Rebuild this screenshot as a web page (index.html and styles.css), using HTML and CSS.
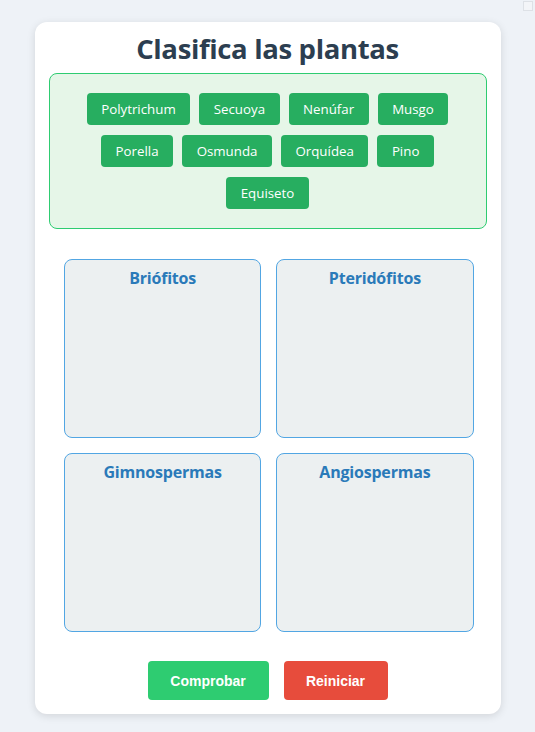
FILE: index.html
```html
<!DOCTYPE html>
<html>
<head>
    <meta charset="utf-8" />
    <title>Clasifica las plantas</title>
    <link rel="stylesheet" href="styles.css">
</head>
<body>
    <div class="corner-box"></div>

    <div class="card">
        <h1 class="title">Clasifica las plantas</h1>

        <div class="bank">
            <div class="chip">Polytrichum</div>
            <div class="chip">Secuoya</div>
            <div class="chip">Nenúfar</div>
            <div class="chip">Musgo</div>
            <div class="chip">Porella</div>
            <div class="chip">Osmunda</div>
            <div class="chip">Orquídea</div>
            <div class="chip">Pino</div>
            <div class="chip">Equiseto</div>
        </div>

        <div class="zones">
            <div class="zone"><h3>Briófitos</h3></div>
            <div class="zone"><h3>Pteridófitos</h3></div>
            <div class="zone"><h3>Gimnospermas</h3></div>
            <div class="zone"><h3>Angiospermas</h3></div>
        </div>

        <div class="actions">
            <button class="btn btn-check">Comprobar</button>
            <button class="btn btn-reset">Reiniciar</button>
        </div>
    </div>
</body>
</html>
```

FILE: styles.css
```css
* { box-sizing: border-box; }

body {
    margin: 0;
    padding: 22px 0 19px;
    background: #eef2f7;
    font-family: "Open Sans", "Noto Sans", sans-serif;
}

.corner-box {
    position: absolute;
    top: 1px;
    right: 2px;
    width: 10px;
    height: 10px;
    border: 1px solid #dde1e6;
    background: #f3f5f8;
}

.card {
    width: 466px;
    margin: 0 auto;
    background: #ffffff;
    border-radius: 12px;
    box-shadow: 0 2px 8px rgba(0, 0, 0, 0.12);
    padding: 10px 14px 14px;
}

.title {
    margin: 0 0 8px;
    text-align: center;
    font-size: 27.5px;
    line-height: 33px;
    font-weight: 700;
    color: #2c3e50;
    letter-spacing: -0.35px;
}

.bank {
    background: #e6f6e8;
    border: 1px solid #2ecc71;
    border-radius: 8px;
    padding: 14px 18px;
    display: flex;
    flex-wrap: wrap;
    justify-content: center;
}

.chip {
    background: #27ae60;
    color: #ffffff;
    font-size: 13.3px;
    height: 32px;
    line-height: 32px;
    padding: 0 14.5px;
    border-radius: 4px;
    margin: 5px 4.5px;
}

.zones {
    margin: 30px 13px 29px 15.5px;
    display: grid;
    grid-template-columns: 1fr 1fr;
    gap: 15px;
}

.zone {
    height: 179px;
    background: #ecf0f1;
    border: 1.5px solid #52a6e3;
    border-radius: 8px;
    padding: 7px 10px;
}

.zone h3 {
    margin: 0;
    text-align: center;
    font-size: 16px;
    font-weight: 700;
    color: #2a7ab9;
    letter-spacing: -0.2px;
}

.actions {
    display: flex;
    justify-content: center;
    gap: 15px;
}

.btn {
    border: 0;
    border-radius: 4px;
    color: #ffffff;
    font-family: "Liberation Sans", Arial, sans-serif;
    font-weight: bold;
    font-size: 14px;
    height: 39px;
    padding: 0 20px;
    cursor: pointer;
}

.btn-check { background: #2ecc71; width: 121px; }
.btn-reset { background: #e74c3c; width: 104px; }
```
